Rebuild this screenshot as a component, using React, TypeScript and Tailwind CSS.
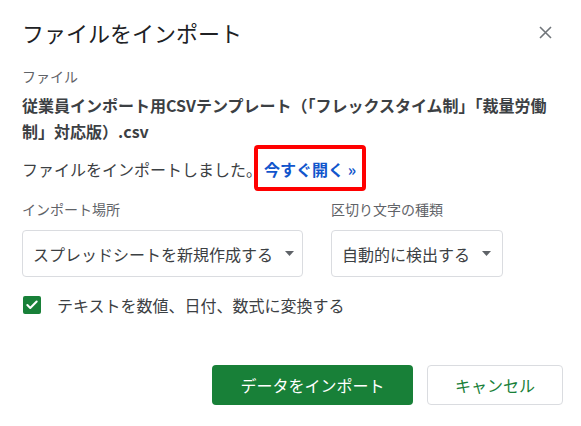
import { Check } from 'lucide-react';

const FONT = { fontFamily: '"Noto Sans CJK JP", "Noto Sans", Arial, sans-serif' };

function Caret() {
  return (
    <svg width="9" height="5" viewBox="0 0 9 5" className="shrink-0">
      <path d="M0 0 L9 0 L4.5 5 Z" fill="#5f6368" />
    </svg>
  );
}

function SelectBox({ label, width }: { label: string; width: string }) {
  return (
    <div
      className={`flex h-[47px] items-center gap-[12px] rounded-[4px] border border-[#dadce0] bg-white pl-[10px] text-[16px] text-[#3c4043] ${width}`}
    >
      <span className="whitespace-nowrap leading-[24px]">{label}</span>
      <Caret />
    </div>
  );
}

export default function App() {
  return (
    <div className="min-h-[426px] w-[581px] bg-white pt-[16px] pl-[22px]" style={FONT}>
      {/* header */}
      <div className="flex h-[32px] items-center justify-between pr-[29px]">
        <h1 className="text-[22px] font-normal leading-[32px] text-[#202124]">ファイルをインポート</h1>
        <button className="flex h-[14px] w-[14px] items-center justify-center">
          <svg width="13" height="13" viewBox="0 0 13 13">
            <path d="M1 1 L12 12 M12 1 L1 12" stroke="#70757a" strokeWidth="1.6" />
          </svg>
        </button>
      </div>

      {/* file */}
      <div className="mt-[18px] text-[14px] leading-[20px] text-[#5f6368]">ファイル</div>
      <p className="mt-[6px] w-[534px] text-[16px] font-bold leading-[26px] text-[#3c4043]">
        従業員インポート用CSVテンプレート（「フレックスタイム制」「裁量労働制」対応版）.csv
      </p>

      <div className="mt-[2px] flex h-[46px] items-center text-[16px] leading-[24px] text-[#3c4043]">
        <span>ファイルをインポートしました。</span>
        <span className="relative ml-[2px] font-bold text-[#1155cc]">
          今すぐ開く »
          <span className="pointer-events-none absolute -top-[12px] -bottom-[10px] -left-[10px] -right-[10px] rounded-[4px] border-4 border-[#ff0000]" />
        </span>
      </div>

      {/* options */}
      <div className="mt-[7px] grid grid-cols-[281px_1fr] gap-x-[28px]">
        <div className="text-[14px] leading-[20px] text-[#5f6368]">インポート場所</div>
        <div className="text-[14px] leading-[20px] text-[#5f6368]">区切り文字の種類</div>
        <div className="mt-[11px]">
          <SelectBox label="スプレッドシートを新規作成する" width="w-[281px]" />
        </div>
        <div className="mt-[11px]">
          <SelectBox label="自動的に検出する" width="w-[172px]" />
        </div>
      </div>

      <label className="mt-[18px] flex h-[20px] items-center gap-[16px] pl-[1px]">
        <span className="flex h-[18px] w-[18px] items-center justify-center rounded-[2px] bg-[#188038]">
          <Check className="h-[14px] w-[14px] text-white" strokeWidth={3.5} />
        </span>
        <span className="text-[16px] leading-[24px] text-[#3c4043]">テキストを数値、日付、数式に変換する</span>
      </label>

      {/* actions */}
      <div className="mt-[50px] flex justify-end gap-[14px] pr-[18px]">
        <button className="h-[40px] w-[201px] rounded-[4px] bg-[#188038] text-[16px] text-white">
          データをインポート
        </button>
        <button className="h-[40px] w-[136px] rounded-[4px] border border-[#dadce0] bg-white text-[16px] text-[#188038]">
          キャンセル
        </button>
      </div>
    </div>
  );
}
